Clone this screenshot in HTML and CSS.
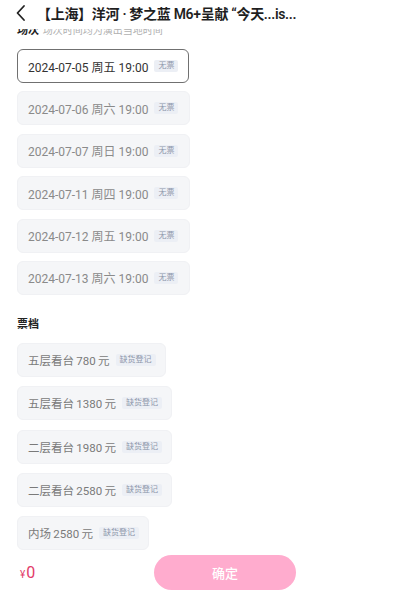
FILE: index.html
```html
<!DOCTYPE html>
<html lang="zh-CN">
<head>
    <meta charset="UTF-8">
    <meta name="viewport" content="width=device-width, initial-scale=1.0">
    <title>选择场次</title>
    <link rel="stylesheet" href="styles.css">
</head>
<body>
    <div class="topbar">
        <svg class="back" width="12" height="18" viewBox="0 0 12 18"><path d="M9 2 L2.5 9 L9 16" fill="none" stroke="#222" stroke-width="1.8" stroke-linecap="round" stroke-linejoin="round"/></svg>
        <div class="title">【上海】洋河 · 梦之蓝 M6+呈献 “今天...is...</div>
    </div>

    <div class="content">
        <div class="label">场次 <span class="hint">场次时间均为演出当地时间</span></div>
        <div class="list">
            <div class="chip active">2024-07-05 周五 19:00 <span class="tag">无票</span></div>
            <div class="chip">2024-07-06 周六 19:00 <span class="tag">无票</span></div>
            <div class="chip">2024-07-07 周日 19:00 <span class="tag">无票</span></div>
            <div class="chip">2024-07-11 周四 19:00 <span class="tag">无票</span></div>
            <div class="chip">2024-07-12 周五 19:00 <span class="tag">无票</span></div>
            <div class="chip">2024-07-13 周六 19:00 <span class="tag">无票</span></div>
        </div>

        <div class="label tier-label">票档</div>
        <div class="list tiers">
            <div class="chip">五层看台&thinsp;780&thinsp;元 <span class="tag">缺货登记</span></div>
            <div class="chip">五层看台&thinsp;1380&thinsp;元 <span class="tag">缺货登记</span></div>
            <div class="chip">二层看台&thinsp;1980&thinsp;元 <span class="tag">缺货登记</span></div>
            <div class="chip">二层看台&thinsp;2580&thinsp;元 <span class="tag">缺货登记</span></div>
            <div class="chip">内场&thinsp;2580&thinsp;元 <span class="tag">缺货登记</span></div>
        </div>
    </div>

    <div class="footer">
        <div class="price"><span class="yen">¥</span>0</div>
        <button class="confirm">确定</button>
    </div>
</body>
</html>
```

FILE: styles.css
```css
* { box-sizing: border-box; }
body { margin: 0; width: 406px; height: 595px; overflow: hidden; background: #fff; font-family: Roboto, "Noto Sans CJK SC", sans-serif; color: #333; position: relative; }

.topbar { position: absolute; top: 0; left: 0; right: 0; height: 29px; background: #fff; display: flex; align-items: center; padding: 0 0 4px 15px; z-index: 2; }
.back { margin-right: 10px; }
.title { font-size: 14px; font-weight: 600; color: #1f1f1f; white-space: nowrap; letter-spacing: -0.3px; }

.content { padding: 23px 17px 0; }
.label { font-size: 11px; font-weight: 600; color: #222; line-height: 16px; }
.hint { font-weight: 400; color: #b0b0b0; font-size: 10px; margin-left: 1px; }

.list { display: flex; flex-direction: column; align-items: flex-start; gap: 8.4px; margin-top: 10px; }
.chip { height: 34px; display: flex; align-items: center; padding: 0 11px 0 10px; background: #f5f6f8; border: 1px solid #f0f1f4; border-radius: 6px; font-size: 12px; color: #8a8a8a; white-space: nowrap; }
.chip.active { background: #fff; border-color: #707070; color: #333; width: 172px; }
.tag { margin-left: 6px; font-size: 8px; color: #8c96aa; background: #eceff5; padding: 0 4px; height: 12px; line-height: 12px; border-radius: 2px; }

.tier-label { margin-top: 22px; }
.tiers { gap: 9.3px; margin-top: 10px; }
.tiers .chip { font-size: 11.5px; padding-right: 9px; color: #7a7a7a; }

.footer { position: absolute; left: 0; right: 0; bottom: 0; height: 45px; background: #fff; display: flex; align-items: center; padding: 0 0 0 20px; }
.price { color: #e23c6a; font-size: 16px; width: 134px; }
.yen { font-size: 10px; margin-right: 1px; }
.confirm { width: 142px; height: 35px; border: none; border-radius: 18px; background: #ffacce; color: #fff; font-family: inherit; font-size: 13px; font-weight: 500; }
```
